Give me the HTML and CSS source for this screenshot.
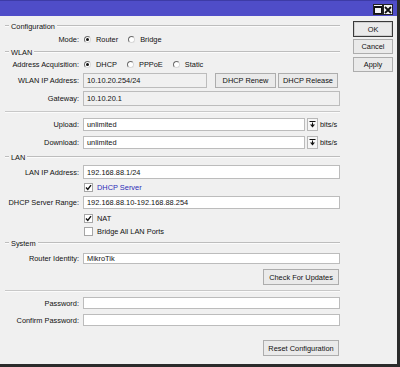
FILE: index.html
```html
<!DOCTYPE html>
<html lang="en">
<head>
    <meta charset="UTF-8">
    <title>Quick Set</title>
    <link rel="stylesheet" href="styles.css">
</head>
<body>
    <div class="window">
        <div class="titlebar">
            <span class="tbtn">
                <svg width="8" height="8" viewBox="0 0 8 8"><rect x="0.5" y="0.5" width="7" height="7" fill="none" stroke="#111" stroke-width="1"/><rect x="0" y="0" width="8" height="2" fill="#111"/></svg>
            </span>
            <span class="tbtn">
                <svg width="8" height="8" viewBox="0 0 8 8"><path d="M1 1 L7 7 M7 1 L1 7" stroke="#111" stroke-width="1.8"/></svg>
            </span>
        </div>

        <div class="frame">
            <div class="main">

                <div class="legend mt4 h12"><span>Configuration</span></div>
                <div class="row h14">
                    <div class="lbl">Mode:</div>
                    <div class="field">
                        <span class="opt"><span class="radio on"></span>Router</span>
                        <span class="opt"><span class="radio"></span>Bridge</span>
                    </div>
                </div>

                <div class="legend h12"><span>WLAN</span></div>
                <div class="row h12">
                    <div class="lbl">Address Acquisition:</div>
                    <div class="field">
                        <span class="opt"><span class="radio on"></span>DHCP</span>
                        <span class="opt"><span class="radio"></span>PPPoE</span>
                        <span class="opt"><span class="radio"></span>Static</span>
                    </div>
                </div>
                <div class="row mt3 h15">
                    <div class="lbl">WLAN IP Address:</div>
                    <div class="field">
                        <div class="input ro w-ip">10.10.20.254/24</div>
                        <div class="btn renew">DHCP Renew</div>
                        <div class="btn release">DHCP Release</div>
                    </div>
                </div>
                <div class="row mt3 h15">
                    <div class="lbl">Gateway:</div>
                    <div class="field">
                        <div class="input ro grow">10.10.20.1</div>
                    </div>
                </div>

                <div class="sep h12"></div>

                <div class="row h13">
                    <div class="lbl">Upload:</div>
                    <div class="field">
                        <div class="input grow">unlimited</div>
                        <div class="drop">
                            <svg width="7" height="7" viewBox="0 0 7 7"><path d="M0.5 0.5 H6.5" stroke="#111" stroke-width="1"/><path d="M3.5 1.5 V4.5" stroke="#111" stroke-width="1"/><path d="M1 3.5 L3.5 6.5 L6 3.5 Z" fill="#111"/></svg>
                        </div>
                        <span class="unit">bits/s</span>
                    </div>
                </div>
                <div class="row mt5 h13">
                    <div class="lbl">Download:</div>
                    <div class="field">
                        <div class="input grow">unlimited</div>
                        <div class="drop">
                            <svg width="7" height="7" viewBox="0 0 7 7"><path d="M0.5 0.5 H6.5" stroke="#111" stroke-width="1"/><path d="M3.5 1.5 V4.5" stroke="#111" stroke-width="1"/><path d="M1 3.5 L3.5 6.5 L6 3.5 Z" fill="#111"/></svg>
                        </div>
                        <span class="unit">bits/s</span>
                    </div>
                </div>

                <div class="legend h16"><span>LAN</span></div>
                <div class="row h14">
                    <div class="lbl">LAN IP Address:</div>
                    <div class="field">
                        <div class="input grow">192.168.88.1/24</div>
                    </div>
                </div>
                <div class="row mt1 h14">
                    <div class="lbl"></div>
                    <div class="field">
                        <span class="opt"><span class="check on"><svg width="7" height="7" viewBox="0 0 7 7"><path d="M1 3.5 L2.8 5.5 L6 1.2" fill="none" stroke="#111" stroke-width="1.4"/></svg></span><span class="link">DHCP Server</span></span>
                    </div>
                </div>
                <div class="row mt2 h13">
                    <div class="lbl">DHCP Server Range:</div>
                    <div class="field">
                        <div class="input grow">192.168.88.10-192.168.88.254</div>
                    </div>
                </div>
                <div class="row mt2 h14">
                    <div class="lbl"></div>
                    <div class="field">
                        <span class="opt"><span class="check on"><svg width="7" height="7" viewBox="0 0 7 7"><path d="M1 3.5 L2.8 5.5 L6 1.2" fill="none" stroke="#111" stroke-width="1.4"/></svg></span>NAT</span>
                    </div>
                </div>
                <div class="row h12">
                    <div class="lbl"></div>
                    <div class="field">
                        <span class="opt"><span class="check"></span>Bridge All LAN Ports</span>
                    </div>
                </div>

                <div class="legend h12"><span>System</span></div>
                <div class="row mt4 h11">
                    <div class="lbl">Router Identity:</div>
                    <div class="field">
                        <div class="input grow">MikroTik</div>
                    </div>
                </div>
                <div class="row mt5 h16 end">
                    <div class="btn wide">Check For Updates</div>
                </div>

                <div class="sep h12"></div>

                <div class="row h12">
                    <div class="lbl">Password:</div>
                    <div class="field">
                        <div class="input grow"></div>
                    </div>
                </div>
                <div class="row mt5 h12">
                    <div class="lbl">Confirm Password:</div>
                    <div class="field">
                        <div class="input grow"></div>
                    </div>
                </div>
                <div class="row mt14 h16 end">
                    <div class="btn wide">Reset Configuration</div>
                </div>

            </div>

            <div class="side">
                <div class="btn side-btn default">OK</div>
                <div class="btn side-btn">Cancel</div>
                <div class="btn side-btn">Apply</div>
            </div>
        </div>
    </div>
</body>
</html>
```

FILE: styles.css
```css
body{
    margin: 0;
    font-family: "Liberation Sans", Arial, sans-serif;
    font-size: 7.4px;
    color: #111;
    background-color: #f0f0f0;
}
.window{
    width: 400px;
    height: 367px;
    box-sizing: border-box;
    border-right: 3px solid #2b2b2b;
    border-bottom: 3px solid #2b2b2b;
    display: flex;
    flex-direction: column;
}
.titlebar{
    height: 16px;
    flex: none;
    box-sizing: border-box;
    background-color: #4f4dc8;
    border-top: 1px solid #3d3ba6;
    display: flex;
    justify-content: flex-end;
    padding: 3px 4px 0 0;
}
.tbtn{
    width: 10px;
    height: 11px;
    box-sizing: border-box;
    background-color: #f4f4f4;
    border: 1px solid #222;
    display: flex;
    align-items: center;
    justify-content: center;
}
.frame{
    display: flex;
    flex: 1;
}
.main{
    width: 335px;
    margin-left: 5px;
}
.side{
    width: 40px;
    margin-left: 13px;
    padding-top: 5px;
    display: flex;
    flex-direction: column;
}

/* row heights / spacing */
.h11{ height: 11px; }
.h12{ height: 12px; }
.h13{ height: 13px; }
.h14{ height: 14px; }
.h15{ height: 15px; }
.h16{ height: 16px; }
.mt1{ margin-top: 1px; }
.mt2{ margin-top: 2px; }
.mt3{ margin-top: 3px; }
.mt4{ margin-top: 4px; }
.mt5{ margin-top: 5px; }
.mt14{ margin-top: 14px; }

.legend{
    display: flex;
    align-items: center;
}
.legend::before,
.legend::after{
    content: "";
    height: 0;
    border-top: 1px solid #bdbdbd;
    border-bottom: 1px solid #fbfbfb;
}
.legend::before{
    width: 4px;
}
.legend::after{
    flex: 1;
}
.legend span{
    padding: 0 2px;
}
.sep{
    display: flex;
    align-items: center;
}
.sep::after{
    content: "";
    flex: 1;
    border-top: 1px solid #c8c8c8;
    border-bottom: 1px solid #fbfbfb;
}

.row{
    display: flex;
    align-items: center;
}
.row.end{
    justify-content: flex-end;
    padding-right: 1px;
}
.lbl{
    width: 74px;
    flex: none;
    margin-right: 4px;
    text-align: right;
    white-space: nowrap;
}
.field{
    flex: 1;
    height: 100%;
    display: flex;
    align-items: center;
}

.input{
    height: 100%;
    box-sizing: border-box;
    background-color: #fff;
    border: 1px solid #bcbcbc;
    padding-left: 3px;
    display: flex;
    align-items: center;
    white-space: nowrap;
}
.input.ro{
    background-color: #f0f0f0;
}
.grow{
    flex: 1;
}
.w-ip{
    width: 124px;
    flex: none;
}

.btn{
    box-sizing: border-box;
    height: 100%;
    background-color: #eaeaea;
    border: 1px solid #adadad;
    display: flex;
    align-items: center;
    justify-content: center;
    white-space: nowrap;
}
.renew{
    width: 61px;
    margin-left: 8px;
}
.release{
    width: 60px;
    margin-left: 2px;
}
.wide{
    width: 76px;
}
.side-btn{
    height: 15px;
    margin-bottom: 3px;
}
.side-btn.default{
    height: 16px;
    margin-bottom: 2px;
    border: 1px solid #3a3a3a;
    box-shadow: inset 0 0 0 1px #cfcfcf;
}

.drop{
    width: 11px;
    height: 100%;
    box-sizing: border-box;
    margin-left: 2px;
    background-color: #f6f6f6;
    border: 1px solid #b8b8b8;
    display: flex;
    align-items: center;
    justify-content: center;
}
.unit{
    margin-left: 2px;
    width: 20px;
}

.opt{
    display: inline-flex;
    align-items: center;
    margin-left: 1px;
    margin-right: 9px;
    white-space: nowrap;
}
.radio{
    width: 7px;
    height: 7px;
    box-sizing: border-box;
    border-radius: 50%;
    border: 1px solid;
    border-color: #6b6b6b #d8d8d8 #d8d8d8 #6b6b6b;
    background-color: #fff;
    margin-right: 5px;
    position: relative;
}
.radio.on::after{
    content: "";
    position: absolute;
    left: 1px;
    top: 1px;
    width: 3px;
    height: 3px;
    border-radius: 50%;
    background-color: #111;
}
.check{
    width: 9px;
    height: 9px;
    box-sizing: border-box;
    background-color: #fff;
    border: 1px solid #a6a6a6;
    margin-right: 4px;
    display: flex;
    align-items: center;
    justify-content: center;
}
.link{
    color: #2c2cb8;
}
```
